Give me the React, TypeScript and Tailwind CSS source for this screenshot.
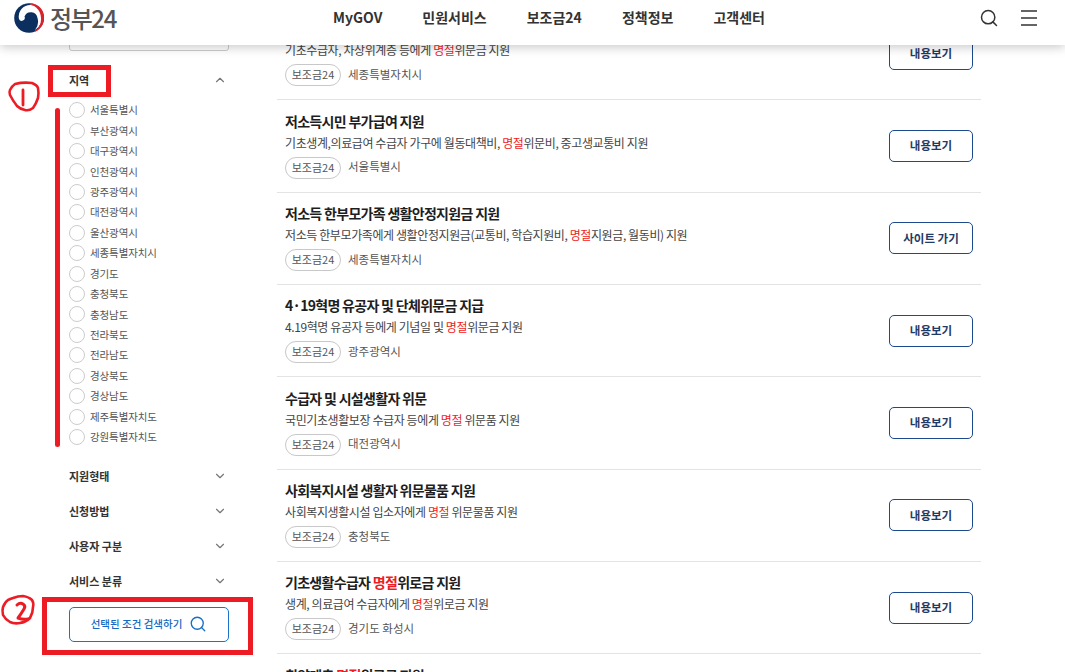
import { ChevronDown, ChevronUp, Search } from "lucide-react";

type Row = {
  title: [string, string?, string?];
  desc: [string, string?, string?];
  region: string;
  action?: string;
};

const regions = [
  "서울특별시",
  "부산광역시",
  "대구광역시",
  "인천광역시",
  "광주광역시",
  "대전광역시",
  "울산광역시",
  "세종특별자치시",
  "경기도",
  "충청북도",
  "충청남도",
  "전라북도",
  "전라남도",
  "경상북도",
  "경상남도",
  "제주특별자치도",
  "강원특별자치도",
];

const rows: Row[] = [
  {
    title: ["기초수급자 ", "명절", "위문금 지원"],
    desc: ["기초수급자, 차상위계층 등에게 ", "명절", "위문금 지원"],
    region: "세종특별자치시",
  },
  {
    title: ["저소득시민 부가급여 지원"],
    desc: ["기초생계,의료급여 수급자 가구에 월동대책비, ", "명절", "위문비, 중고생교통비 지원"],
    region: "서울특별시",
  },
  {
    title: ["저소득 한부모가족 생활안정지원금 지원"],
    desc: ["저소득 한부모가족에게 생활안정지원금(교통비, 학습지원비, ", "명절", "지원금, 월동비) 지원"],
    region: "세종특별자치시",
    action: "사이트 가기",
  },
  {
    title: ["4·19혁명 유공자 및 단체위문금 지급"],
    desc: ["4.19혁명 유공자 등에게 기념일 및 ", "명절", "위문금 지원"],
    region: "광주광역시",
  },
  {
    title: ["수급자 및 시설생활자 위문"],
    desc: ["국민기초생활보장 수급자 등에게 ", "명절", " 위문품 지원"],
    region: "대전광역시",
  },
  {
    title: ["사회복지시설 생활자 위문물품 지원"],
    desc: ["사회복지생활시설 입소자에게 ", "명절", " 위문물품 지원"],
    region: "충청북도",
  },
  {
    title: ["기초생활수급자 ", "명절", "위로금 지원"],
    desc: ["생계, 의료급여 수급자에게 ", "명절", "위로금 지원"],
    region: "경기도 화성시",
  },
  {
    title: ["취약계층 ", "명절", "위로금 지원"],
    desc: ["취약계층에게 ", "명절", "위로금 지원"],
    region: "경기도",
  },
];

function Highlighted({ parts }: { parts: [string, string?, string?] }) {
  return (
    <>
      {parts[0]}
      {parts[1] && <span className="text-[#f01c24]">{parts[1]}</span>}
      {parts[2]}
    </>
  );
}

function Taegeuk() {
  return (
    <svg width="30" height="30" viewBox="0 0 30 30" className="shrink-0">
      <circle cx="15" cy="15" r="14.8" fill="#0b2f5f" />
      <path d="M5 16 A11.5 11.5 0 0 1 27.5 11 A14 14 0 0 1 21 27 A13 13 0 0 0 23.5 15 A6.8 6.8 0 0 0 10.5 13.5 A3 3 0 0 1 5 16 Z" fill="#fff" />
      <path d="M9 1.6 A14.8 14.8 0 0 1 29.8 15 A14.8 14.8 0 0 1 20 29 A16 16 0 0 0 27.6 14 A14 14 0 0 0 9 1.6 Z" fill="#fff" />
      <path d="M11 0.8 A14.8 14.8 0 0 1 20 29 A15.5 15.5 0 0 0 27 15 A14.5 14.5 0 0 0 11 0.8 Z" fill="#d8232f" />
    </svg>
  );
}

function Header() {
  return (
    <header className="absolute inset-x-0 top-0 z-10 flex h-[45px] items-center bg-white pb-[10px] shadow-[0_2px_10px_rgba(0,0,0,0.22)]">
      <div className="flex w-[333px] items-center pl-[14px]">
        <Taegeuk />
        <span className="ml-[6px] text-[24px] font-medium leading-[30px] tracking-[-1.4px] text-[#555]">정부24</span>
      </div>
      <nav className="flex gap-[40px] text-[14px] font-semibold text-[#333]">
        <span>MyGOV</span>
        <span>민원서비스</span>
        <span>보조금24</span>
        <span>정책정보</span>
        <span>고객센터</span>
      </nav>
      <div className="ml-auto flex items-center gap-[21px] pr-[27px] text-[#333]">
        <Search size={20} strokeWidth={1.8} />
        <svg width="18" height="16" viewBox="0 0 18 16" stroke="#333" strokeWidth="1.6">
          <path d="M1 1H17M1 8H17M1 15H17" />
        </svg>
      </div>
    </header>
  );
}

function FilterHeading({ label, open }: { label: string; open?: boolean }) {
  return (
    <div className="flex items-center justify-between pr-[2px] text-[11px] font-semibold text-[#333]">
      <span>{label}</span>
      {open ? (
        <ChevronUp size={14} className="text-[#777]" />
      ) : (
        <ChevronDown size={14} className="text-[#777]" />
      )}
    </div>
  );
}

function Sidebar() {
  return (
    <aside className="ml-[69px] w-[160px] shrink-0 pt-[20px]">
      <div className="h-[31px] rounded-[3px] border border-[#ccc]" />
      <div className="mt-[21px]">
        <FilterHeading label="지역" open />
      </div>
      <ul className="mt-[11.4px]">
        {regions.map((region) => (
          <li key={region} className="flex h-[20.45px] items-center gap-[5px] text-[10.5px] tracking-[-0.1px] text-[#555]">
            <span className="size-[16px] rounded-full border border-[#ccc] bg-white" />
            {region}
          </li>
        ))}
      </ul>
      <div className="mt-[20.6px] flex flex-col gap-[18.6px]">
        <FilterHeading label="지원형태" />
        <FilterHeading label="신청방법" />
        <FilterHeading label="사용자 구분" />
        <FilterHeading label="서비스 분류" />
      </div>
      <button className="mt-[17px] flex h-[35px] w-full items-center justify-center gap-[7px] rounded-[5px] border border-[#1a73c9] text-[10.5px] font-medium text-[#1668c0]">
        선택된 조건 검색하기
        <Search size={18} strokeWidth={1.8} className="text-[#1a6fc4]" />
      </button>
    </aside>
  );
}

function ResultRow({ row }: { row: Row }) {
  return (
    <li className="flex h-[92.35px] shrink-0 items-center justify-between border-b border-[#e3e3e3] px-[8px]">
      <div className="pb-[3px]">
        <p className="text-[14px] font-bold leading-[20px] tracking-[-0.7px] text-[#1e1e1e]">
          <Highlighted parts={row.title} />
        </p>
        <p className="mt-[2px] text-[12px] leading-[20px] tracking-[-0.4px] text-[#444]">
          <Highlighted parts={row.desc} />
        </p>
        <div className="mt-[4px] flex items-center gap-[7px] text-[11.5px] text-[#555]">
          <span className="flex h-[22px] w-[56px] items-center justify-center rounded-full border border-[#c8c8c8] pb-[1px] text-[11px]">
            보조금24
          </span>
          <span className="pb-[1px]">{row.region}</span>
        </div>
      </div>
      <button className="h-[32px] w-[84px] rounded-[5px] border border-[#1d4a8c] text-[11.5px] font-semibold text-[#1f3a66]">
        {row.action ?? "내용보기"}
      </button>
    </li>
  );
}

// 빨간 표시: 스크린샷 위에 손으로 그린 주석
function Annotations() {
  return (
    <>
      <div className="absolute left-[48px] top-[65px] h-[32px] w-[63px] border-[5px] border-[#ed1c24]" />
      <div className="absolute left-[55px] top-[108px] h-[339px] w-[5px] rounded-full bg-[#ed1c24]" />
      <div className="absolute left-[42px] top-[597px] h-[58px] w-[211px] border-[5px] border-[#ed1c24]" />
      <svg className="absolute left-[5px] top-[78px]" width="40" height="40" viewBox="0 0 40 40" fill="none" stroke="#ed1c24" strokeWidth="2.6" strokeLinejoin="round" strokeLinecap="round">
        <path d="M10 6 Q18 4 27 5 Q32 7 33 10 Q34 15 33 20 Q31 26 28 30 Q24 33 20 32 Q15 31 12 28 Q8 23 5 17 Q4 14 5 12 Q7 8 10 6 Z" />
        <path d="M18 12 V27" strokeWidth="2.8" />
      </svg>
      <svg className="absolute left-0 top-[590px]" width="45" height="42" viewBox="0 0 45 42" fill="none" stroke="#ed1c24" strokeWidth="2.6" strokeLinejoin="round" strokeLinecap="round">
        <path d="M13 8 Q18 6 23 6 Q29 7 32 10 Q34 13 33 17 Q33 23 30 28 Q26 32 20 33 Q14 34 10 32 Q5 29 3 25 Q2 20 3 17 Q5 12 8 10 Q10 9 13 8 Z" />
        <path d="M17 15 Q20 12 23 14 Q26 16 24 19 Q21 24 18 28 Q23 30 28 29" strokeWidth="3" />
      </svg>
    </>
  );
}

export default function App() {
  return (
    <div
      className="relative h-[672px] overflow-hidden bg-white"
      style={{ fontFamily: '"Noto Sans CJK KR", "Noto Sans", sans-serif' }}
    >
      <Header />
      <main className="flex">
        <Sidebar />
        <ul className="ml-[48px] flex h-[672px] w-[704px] shrink-0 flex-col pt-[8px]">
          {rows.map((row, i) => (
            <ResultRow key={i} row={row} />
          ))}
        </ul>
      </main>
      <Annotations />
    </div>
  );
}
